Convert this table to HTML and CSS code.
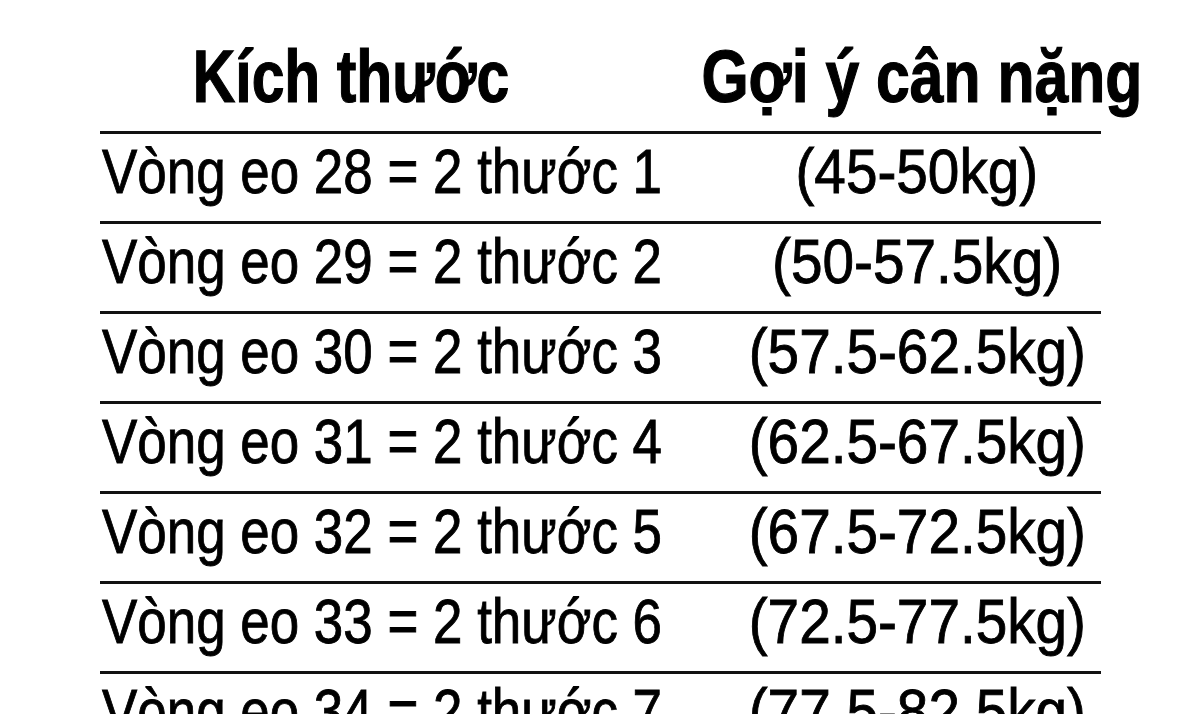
FILE: index.html
```html
<!DOCTYPE html>
<html lang="vi">
<head>
<meta charset="utf-8">
<title>Bảng kích thước</title>
<link rel="stylesheet" href="styles.css">
</head>
<body>
<div class="sheet">
  <div class="head">
    <div class="hc hc1"><span class="ht ht1">Kích thước</span></div>
    <div class="hc hc2"><span class="ht ht2">Gợi ý cân nặng</span></div>
  </div>
  <div class="row"><div class="c1"><span class="t1">Vòng eo 28 = 2 thước 1</span></div><div class="c2"><span class="t2">(45-50kg)</span></div></div>
  <div class="row"><div class="c1"><span class="t1">Vòng eo 29 = 2 thước 2</span></div><div class="c2"><span class="t2">(50-57.5kg)</span></div></div>
  <div class="row"><div class="c1"><span class="t1">Vòng eo 30 = 2 thước 3</span></div><div class="c2"><span class="t2">(57.5-62.5kg)</span></div></div>
  <div class="row"><div class="c1"><span class="t1">Vòng eo 31 = 2 thước 4</span></div><div class="c2"><span class="t2">(62.5-67.5kg)</span></div></div>
  <div class="row"><div class="c1"><span class="t1">Vòng eo 32 = 2 thước 5</span></div><div class="c2"><span class="t2">(67.5-72.5kg)</span></div></div>
  <div class="row"><div class="c1"><span class="t1">Vòng eo 33 = 2 thước 6</span></div><div class="c2"><span class="t2">(72.5-77.5kg)</span></div></div>
  <div class="row"><div class="c1"><span class="t1">Vòng eo 34 = 2 thước 7</span></div><div class="c2"><span class="t2">(77.5-82.5kg)</span></div></div>
</div>
</body>
</html>
```

FILE: styles.css
```css
html, body {
  margin: 0;
  padding: 0;
  background: #ffffff;
  overflow: hidden;
}
body {
  width: 1199px;
  height: 714px;
  font-family: "Liberation Sans", Arial, sans-serif;
  color: #000;
}
.sheet {
  margin-left: 100px;
  width: 1001px;
}
.head {
  display: grid;
  grid-template-columns: 600px 401px;
  height: 131px;
  box-sizing: border-box;
  padding-top: 35px;
}
.hc {
  display: flex;
  justify-content: center;
  align-items: flex-start;
  min-width: 0;
}
.hc1 { padding-right: 98px; }
.hc2 { padding-left: 43px; }
.ht {
  display: inline-block;
  white-space: nowrap;
  font-weight: 700;
  font-size: 74px;
  line-height: 84px;
  transform-origin: center;
  -webkit-text-stroke: 1.2px #000;
}
.ht1 { transform: scaleX(0.795); }
.ht2 { transform: scaleX(0.82); }
.row {
  display: grid;
  grid-template-columns: 600px 401px;
  height: 90px;
  box-sizing: border-box;
  border-top: 3px solid #111;
  align-items: start;
}
.c1, .c2 {
  font-size: 63px;
  line-height: 75px;
  white-space: nowrap;
  min-width: 0;
  -webkit-text-stroke: 0.9px #000;
}
.c1 { padding-left: 2px; }
.c2 {
  display: flex;
  justify-content: center;
  padding-left: 33px;
}
.t1 {
  display: inline-block;
  transform: scaleX(0.84);
  transform-origin: left center;
}
.t2 {
  display: inline-block;
  transform: scaleX(0.9);
  transform-origin: center;
}
```
